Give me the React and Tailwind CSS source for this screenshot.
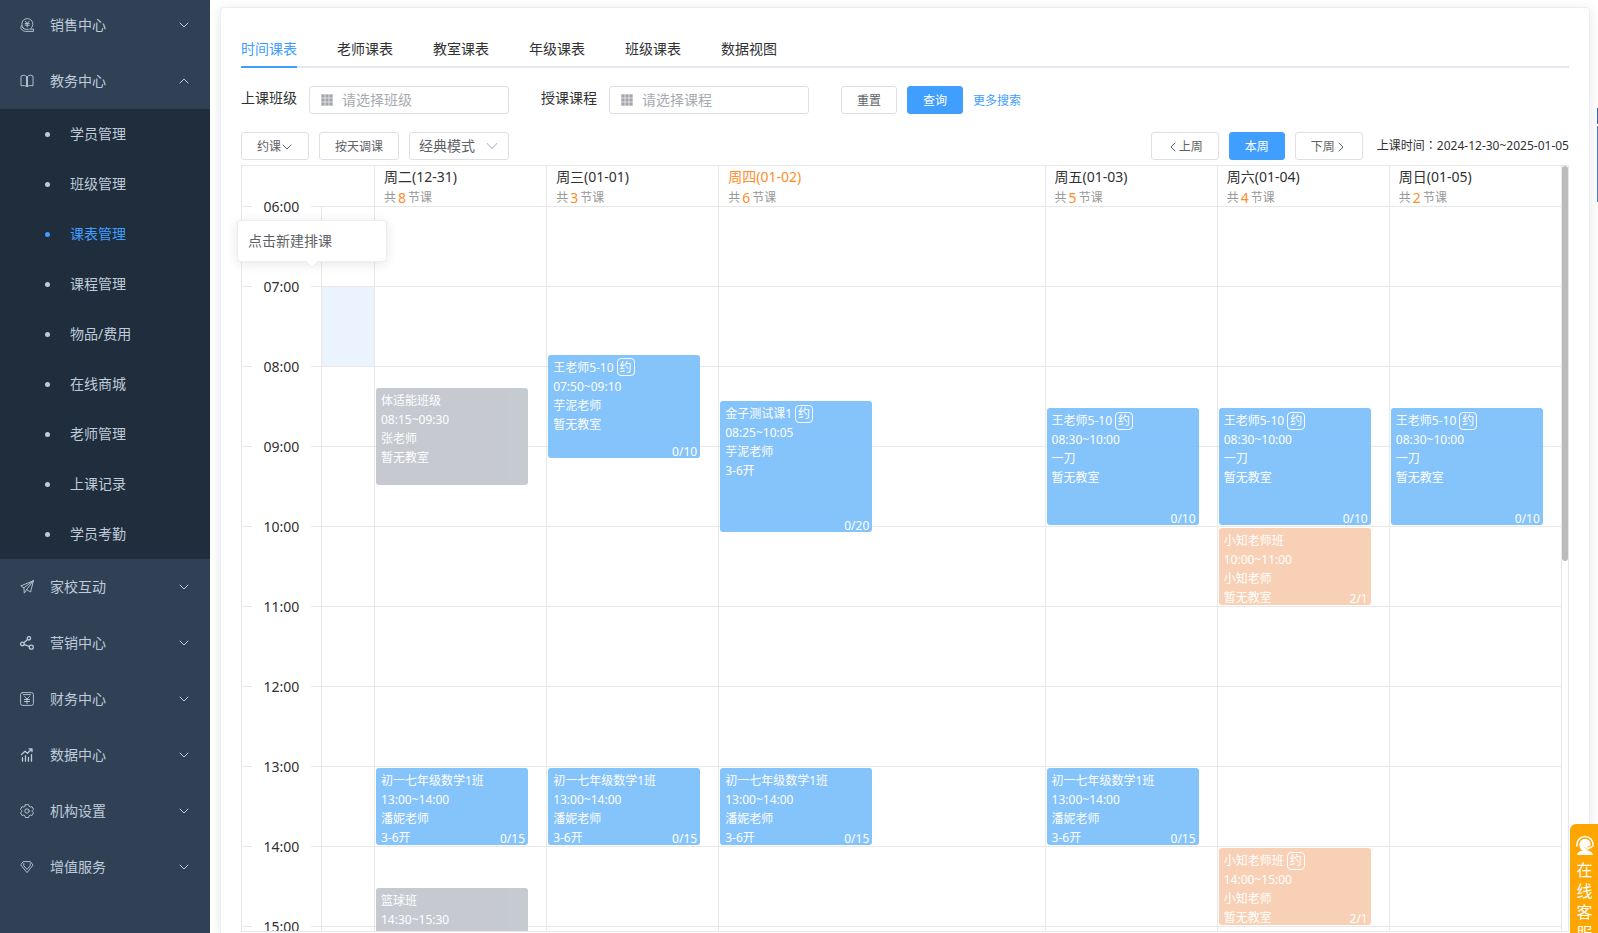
import { useState } from 'react';

const SUB_ITEMS = ['学员管理', '班级管理', '课表管理', '课程管理', '物品/费用', '在线商城', '老师管理', '上课记录', '学员考勤'];
const TABS = ['时间课表', '老师课表', '教室课表', '年级课表', '班级课表', '数据视图'];
const HOURS = ['06:00', '07:00', '08:00', '09:00', '10:00', '11:00', '12:00', '13:00', '14:00', '15:00'];
const HOUR_HEIGHT = 80;

const math = { name: '初一七年级数学1班', start: '13:00', end: '14:00', teacher: '潘妮老师', room: '3-6开', count: '0/15', tone: 'blue' };
const morning = { name: '王老师5-10', bookable: true, start: '08:30', end: '10:00', teacher: '一刀', room: '暂无教室', count: '0/10', tone: 'blue' };

const DAYS = [
  {
    title: '周二(12-31)', total: 8, events: [
      { name: '体适能班级', start: '08:15', end: '09:30', teacher: '张老师', room: '暂无教室', tone: 'gray' },
      math,
      { name: '篮球班', start: '14:30', end: '15:30', tone: 'gray' },
    ],
  },
  {
    title: '周三(01-01)', total: 3, events: [
      { name: '王老师5-10', bookable: true, start: '07:50', end: '09:10', teacher: '芋泥老师', room: '暂无教室', count: '0/10', tone: 'blue' },
      math,
    ],
  },
  {
    title: '周四(01-02)', total: 6, today: true, wide: true, events: [
      { name: '金子测试课1', bookable: true, start: '08:25', end: '10:05', teacher: '芋泥老师', room: '3-6开', count: '0/20', tone: 'blue' },
      math,
    ],
  },
  { title: '周五(01-03)', total: 5, events: [morning, math] },
  {
    title: '周六(01-04)', total: 4, events: [
      morning,
      { name: '小知老师班', start: '10:00', end: '11:00', teacher: '小知老师', room: '暂无教室', count: '2/1', tone: 'orange' },
      { name: '小知老师班', bookable: true, start: '14:00', end: '15:00', teacher: '小知老师', room: '暂无教室', count: '2/1', tone: 'orange' },
    ],
  },
  { title: '周日(01-05)', total: 2, events: [morning] },
];

const TONES = {
  blue: 'bg-[#78bdfb]',
  gray: 'bg-[#c0c4cc]',
  orange: 'bg-[#f8ccae]',
};

function toHours(time) {
  const [h, m] = time.split(':').map(Number);
  return h + m / 60;
}

function Icon({ children, className = 'size-[14px]', width = 1 }) {
  return (
    <svg viewBox="0 0 14 14" className={className} fill="none" stroke="currentColor" strokeWidth={width} strokeLinecap="round" strokeLinejoin="round" aria-hidden="true">
      {children}
    </svg>
  );
}

function Chevron({ dir = 'down', className = 'size-3' }) {
  const d = {
    down: 'M2 4 6 8l4-4',
    up: 'M2 8l4-4 4 4',
    left: 'M8 2 4 6l4 4',
    right: 'M4 2l4 4-4 4',
  }[dir];
  return (
    <svg viewBox="0 0 12 12" className={className} fill="none" stroke="currentColor" strokeLinecap="round" strokeLinejoin="round" aria-hidden="true">
      <path d={d} />
    </svg>
  );
}

const icons = {
  sales: (
    <>
      <path d="M3.4 10.2a5.6 5.6 0 1 1 7.600.2" />
      <path d="M5.400 3.400l1.800 2 1.800-2M5.200 5.600h4M5.200 7.200h4M7.200 5.400v3.400" />
      <path d="M1.800 7.400C.6 8.600.400 10 1.400 11.200c1 1.200 2.600 2.200 4.400 2.200h7.700v-2.200H9.800M2.200 9.200c1 1.400 2.400 2.200 4.200 2.200h1.800" />
    </>
  ),
  book: (
    <>
      <path d="M7 3C6 1.600 4.600 1.200 3.200 1.200v0L1 2.200v9.600c2.200-.5 4.600-.3 6 1 1.400-1.300 3.800-1.500 6-1V2.200l-2.200-1C9.400 1.200 8 1.600 7 3z" />
      <path d="M6.500 3.200v9M7.500 3.200v9" />
    </>
  ),
  plane: (
    <>
      <path d="M13.4.7.8 5.9l3.1 1.9L13.4.7 10.6 12 6.6 9.6" />
      <path d="M3.9 7.8l.4 5.3 2.3-3.5L13.4.7" />
    </>
  ),
  share: (
    <>
      <circle cx="8.9" cy="2.3" r="1.7" />
      <circle cx="2.4" cy="8" r="1.8" />
      <circle cx="11.3" cy="11.2" r="2" />
      <path d="M7.5 3.6 3.9 6.7M4.3 8.6l5 1.9" />
    </>
  ),
  finance: (
    <>
      <rect x=".6" y=".6" width="12.8" height="12.8" rx="2" />
      <path d="M3.4 2.6h7.200M4.600 4.600 7 7l2.400-2.400M4.400 7.500h5.200M4.400 9.500h5.200M7 7v4.600" />
    </>
  ),
  data: (
    <>
      <path d="M1.4 6.6 5 3.200l2.400 2L11.8 1M9 .9h3v2.800" />
      <path d="M2.500 9.600v3.600M5.500 7.600v5.600M8.500 9.500v3.700M11.500 6.600v6.600" />
    </>
  ),
  gear: (
    <>
      <path d="M5.4.7h3.2l.5 1.7 1.2.7 1.7-.5 1.5 2.7-1.2 1.2v1.2l1.2 1.2-1.5 2.6-1.7-.4-1.2.7-.5 1.7H5.4l-.5-1.7-1.2-.7-1.7.4L.5 8.9l1.2-1.2V6.5L.5 5.3 2 2.6l1.7.5 1.2-.7z" />
      <circle cx="7" cy="7" r="2.2" />
    </>
  ),
  gem: (
    <>
      <path d="M3.6 1.6h6.8L13 5.2l-6 7.400-6-7.400z" />
      <path d="M3.800 3.600v2.200L7 9.400l3.200-3.600V3.600" />
    </>
  ),
};

const MENU = [
  { label: '销售中心', icon: 'sales' },
  { label: '教务中心', icon: 'book', open: true },
  { label: '家校互动', icon: 'plane' },
  { label: '营销中心', icon: 'share', bold: true },
  { label: '财务中心', icon: 'finance' },
  { label: '数据中心', icon: 'data', bold: true },
  { label: '机构设置', icon: 'gear' },
  { label: '增值服务', icon: 'gem' },
];

function Sidebar() {
  return (
    <aside className="w-[210px] shrink-0 overflow-hidden bg-[#304156] text-sm text-[#bfcbd9]">
      <nav className="-mt-[3px]">
        {MENU.map((item) => (
          <div key={item.label}>
            <button type="button" className="flex h-14 w-full items-center px-5">
              <Icon width={item.bold ? 1.3 : 0.9}>{icons[item.icon]}</Icon>
              <span className="ml-4 flex-1 text-left">{item.label}</span>
              <Chevron dir={item.open ? 'up' : 'down'} />
            </button>
            {item.open && (
              <ul className="bg-[#1f2d3d]">
                {SUB_ITEMS.map((sub) => (
                  <li key={sub}>
                    <a href="#" className={`flex h-[50px] items-center gap-5 pl-[45px] ${sub === '课表管理' ? 'text-[#409eff]' : ''}`}>
                      <span className="size-[5px] rounded-full bg-current" />
                      {sub}
                    </a>
                  </li>
                ))}
              </ul>
            )}
          </div>
        ))}
      </nav>
    </aside>
  );
}

function Button({ primary, children }) {
  const tone = primary ? 'border-[#409eff] bg-[#409eff] text-white' : 'border-[#dcdfe6] bg-white text-[#606266]';
  return (
    <button type="button" className={`flex h-7 items-center justify-center rounded-[3px] border px-[15px] pt-[2px] text-xs whitespace-nowrap ${tone}`}>
      {children}
    </button>
  );
}

function GridIcon() {
  return (
    <svg viewBox="0 0 12 12" className="size-3 shrink-0" fill="#a3a6ad" aria-hidden="true">
      {[0, 4, 8].map((x) => [0, 4, 8].map((y) => <rect key={`${x}-${y}`} x={x + 0.3} y={y + 0.3} width="3.4" height="3.4" />))}
    </svg>
  );
}

function Field({ id, label, placeholder }) {
  return (
    <div className="flex items-center gap-3">
      <label htmlFor={id} className="pb-1 text-sm text-[#303133]">{label}</label>
      <div className="flex h-7 w-[200px] items-center gap-[9px] rounded-[3px] border border-[#dcdfe6] pr-2 pl-[11px]">
        <GridIcon />
        <input id={id} type="text" placeholder={placeholder} className="w-full min-w-0 text-sm outline-none placeholder:text-[#a8abb2]" />
      </div>
    </div>
  );
}

function EventCard({ event }) {
  const start = toHours(event.start);
  const end = toHours(event.end);
  return (
    <div
      className={`absolute left-px w-[152px] overflow-hidden rounded-[3px] px-[5px] pt-[3px] text-xs leading-[19px] text-white opacity-90 ${TONES[event.tone]}`}
      style={{ top: (start - 6) * HOUR_HEIGHT + 1, height: (end - start) * HOUR_HEIGHT - 3 }}
    >
      <p className="flex items-center gap-[3px]">
        {event.name}
        {event.bookable && <span className="flex size-[18px] items-center justify-center rounded border border-white">约</span>}
      </p>
      <p>{event.start}~{event.end}</p>
      {event.teacher && <p>{event.teacher}</p>}
      {event.room && <p>{event.room}</p>}
      {event.count && <span className="absolute right-[3px] bottom-0 leading-[13px]">{event.count}</span>}
    </div>
  );
}

function HourCells({ active }) {
  return HOURS.map((hour) => (
    <div key={hour} className={`h-20 border-b border-[#e8e8e8] ${hour === active ? 'bg-[#ebf3ff]' : ''}`} />
  ));
}

function DayColumn({ day }) {
  return (
    <div className={`min-w-0 border-r border-[#e8e8e8] ${day.wide ? 'flex-[327]' : 'flex-[172]'}`}>
      <div className="h-[41px] border-b border-[#e8e8e8] pl-[9px] whitespace-nowrap">
        <p className={`text-sm leading-[22px] ${day.today ? 'text-[#ff8d29]' : 'text-[#303133]'}`}>{day.title}</p>
        <p className="flex text-xs leading-[20px] text-[#999999]">
          共<span className="mx-[2px] text-sm leading-[20px] text-[#ff8d29]">{day.total}</span>节课
        </p>
      </div>
      <div className="relative">
        <HourCells />
        {day.events.map((event) => <EventCard key={event.start} event={event} />)}
      </div>
    </div>
  );
}

function Timetable() {
  return (
    <div className="relative mt-[5px] mb-px min-h-0 flex-1">
      <div className="flex h-full overflow-hidden border border-[#e8e8e8]">
        <div className="w-[79px] shrink-0 pt-[31px]">
          {HOURS.map((hour) => (
            <div key={hour} className="flex h-20 text-sm text-[#303133]">
              <span className="mt-[9px] h-px w-[10px] bg-[#e8e8e8]" />
              <span className="flex-1 text-center leading-5">{hour}</span>
              <span className="mt-[9px] h-px w-[10px] bg-[#e8e8e8]" />
            </div>
          ))}
        </div>
        <div className="w-[54px] shrink-0 border-r border-[#e8e8e8]">
          <div className="h-[41px] border-b border-[#e8e8e8]" />
          <div className="border-l border-[#e8e8e8]">
            <HourCells active="07:00" />
          </div>
        </div>
        {DAYS.map((day) => <DayColumn key={day.title} day={day} />)}
        <div className="w-[6px] shrink-0">
          <div className="h-[395px] rounded-full bg-[#bbbbbb]" />
        </div>
      </div>
      <div role="tooltip" className="absolute top-[55px] -left-1 w-[150px] rounded border border-[#ebeef5] bg-white p-[10px] text-sm leading-5 text-[#606266] shadow-[0_2px_12px_rgba(0,0,0,0.1)]">
        点击新建排课
        <svg viewBox="0 0 12 6" className="absolute -bottom-[6px] left-[68px] h-[6px] w-3" aria-hidden="true">
          <path d="M0 0l6 6 6-6" fill="#fff" stroke="#ebeef5" />
        </svg>
      </div>
    </div>
  );
}

function ServiceWidget() {
  return (
    <button type="button" className="fixed right-0 bottom-0 flex h-[109px] w-7 flex-col items-center overflow-hidden rounded-tl-md bg-[#ffa500] pt-[11px] pl-px text-base leading-[21px] text-white">
      <svg viewBox="0 0 18 20" className="mb-[5px] h-5 w-[18px] shrink-0" aria-hidden="true">
        <path d="M1 11.500V9.500a8 8 0 0 1 16 0v2" fill="none" stroke="#fff" strokeWidth="1.600" />
        <ellipse cx="9" cy="10" rx="5.600" ry="6.200" fill="#fff" />
        <path d="M1 20c.4-2.600 2.600-3.600 5.400-4.400h5.200c2.800.8 5 1.800 5.400 4.400z" fill="#fff" />
        <path d="M14.800 10.500c-.8 1.400-2.400 1.800-3.800 1.500M8.800 12.300c1.600 2.600 6 2 7.400-.6" fill="none" stroke="#ffa500" strokeWidth=".9" />
        <path d="M9.600 12.400c1.800 1.600 5.400 1.200 7-1.200" fill="none" stroke="#fff" strokeWidth="1.200" />
      </svg>
      {['在', '线', '客', '服'].map((ch) => <span key={ch}>{ch}</span>)}
    </button>
  );
}

export default function App() {
  const [tab, setTab] = useState('时间课表');

  return (
    <div className="flex h-screen overflow-hidden bg-white font-['Noto_Sans','Noto_Sans_CJK_SC',sans-serif]">
      <Sidebar />
      <main className="flex min-w-0 flex-1 pt-[7px] pr-2 pl-[10px]">
        <section className="flex min-w-0 flex-1 flex-col rounded-t border border-b-0 border-[#ebeef5] px-5 pt-5 shadow-[0_2px_12px_rgba(0,0,0,0.1)]">
          <div role="tablist" className="flex h-10 shrink-0 gap-10 border-b-2 border-[#e4e7ed] text-sm">
            {TABS.map((name) => (
              <button
                key={name}
                type="button"
                role="tab"
                aria-selected={tab === name}
                onClick={() => setTab(name)}
                className={`-mb-[2px] border-b-2 pt-1 ${tab === name ? 'border-[#409eff] text-[#409eff]' : 'border-transparent text-[#303133]'}`}
              >
                {name}
              </button>
            ))}
          </div>

          <div className="mt-[18px] flex items-center">
            <div className="flex gap-8">
              <Field id="class" label="上课班级" placeholder="请选择班级" />
              <Field id="course" label="授课课程" placeholder="请选择课程" />
            </div>
            <div className="ml-8 flex items-center gap-[10px]">
              <Button>重置</Button>
              <Button primary>查询</Button>
              <a href="#" className="pt-[2px] text-xs text-[#409eff]">更多搜索</a>
            </div>
          </div>

          <div className="mt-[18px] flex items-center gap-[10px]">
            <Button>约课<Chevron /></Button>
            <Button>按天调课</Button>
            <div className="relative">
              <select aria-label="课表模式" className="h-7 w-[100px] appearance-none rounded-[3px] border border-[#dcdfe6] bg-white px-[9px] text-sm text-[#606266]">
                <option>经典模式</option>
              </select>
              <Chevron className="pointer-events-none absolute top-[7px] right-[10px] size-[14px] text-[#c0c4cc]" />
            </div>
            <div className="ml-auto flex items-center gap-[10px]">
              <Button><Chevron dir="left" />上周</Button>
              <Button primary>本周</Button>
              <Button>下周<Chevron dir="right" /></Button>
              <p className="ml-1 pb-[2px] text-xs text-[#303133]">
                上课时间<span className="font-['Noto_Sans_CJK_TC',sans-serif]">：</span>2024-12-30~2025-01-05
              </p>
            </div>
          </div>

          <Timetable />
        </section>
      </main>
      <div className="fixed top-[108px] right-0 flex w-px flex-col gap-[2px]">
        <span className="h-4 bg-[#2a62d8]" />
        <span className="h-[76px] bg-[#3f7be8]" />
      </div>
      <ServiceWidget />
    </div>
  );
}
